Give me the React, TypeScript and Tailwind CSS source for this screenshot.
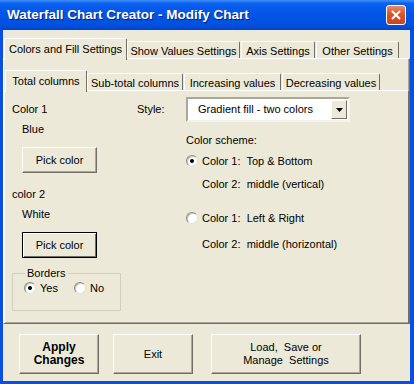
import React, { useState } from 'react';

const font = { fontFamily: '"Liberation Sans", Arial, sans-serif' };

function Radio({ checked, label, onClick }: { checked: boolean; label?: string; onClick?: () => void }) {
  return (
    <div className="flex items-center cursor-default whitespace-pre" onClick={onClick}>
      <span className="relative w-[12px] h-[12px] rounded-full bg-white border border-t-[#8d8b80] border-l-[#8d8b80] border-b-[#e4e2d6] border-r-[#e4e2d6] shadow-[inset_1px_1px_0_#c9c6b8] flex items-center justify-center">
        {checked && <span className="w-[4px] h-[4px] rounded-full bg-black" />}
      </span>
      {label && <span className="ml-[4px]">{label}</span>}
    </div>
  );
}

function Button({ children, focused, className, bold }: { children: React.ReactNode; focused?: boolean; className?: string; bold?: boolean }) {
  return (
    <button
      className={
        'flex flex-col items-center justify-center leading-[13px] bg-[#ece9d8] ' +
        (focused
          ? 'border border-black shadow-[inset_1px_1px_0_#ffffff,inset_-1px_-1px_0_#716f64] '
          : 'border border-t-white border-l-white border-b-[#716f64] border-r-[#716f64] shadow-[inset_-1px_-1px_0_#aca899] ') +
        (bold ? 'font-bold text-[12px] ' : '') +
        (className || '')
      }
    >
      {children}
    </button>
  );
}

function Tab({ label, active, className, onClick }: { label: string; active?: boolean; className: string; onClick?: () => void }) {
  return (
    <div
      onClick={onClick}
      className={
        'flex justify-center cursor-default border-l border-t border-r border-l-white border-t-white border-r-[#716f64] rounded-t-[2px] bg-[#ece9d8] ' +
        (active ? 'h-[22px] pt-[2px] -mb-[2px] relative z-10 ' : 'h-[17px] pt-[1px] ') +
        className
      }
    >
      {label}
    </div>
  );
}

export default function App() {
  const [scheme, setScheme] = useState(0);
  const [borders, setBorders] = useState(true);

  return (
    <div className="w-[414px] h-[384px] bg-[#0a4fe0] flex flex-col text-[11px] text-black" style={font}>
      {/* title bar */}
      <div className="h-[30px] flex items-center justify-between pl-[7px] pr-[8px] bg-[linear-gradient(to_bottom,#3d8ef7_0%,#0a5ff0_12%,#0055e5_50%,#0050de_85%,#0044c8_100%)]">
        <span className="text-white font-bold text-[13.5px] [text-shadow:1px_1px_0_#0a1f80]">
          Waterfall Chart Creator - Modify Chart
        </span>
        <div className="w-[20px] h-[20px] rounded-[3px] border border-white bg-[linear-gradient(to_bottom,#e98a6c,#d9552d_45%,#c94422)] flex items-center justify-center">
          <svg width="10" height="10" viewBox="0 0 10 10">
            <path d="M1 1 L9 9 M9 1 L1 9" stroke="white" strokeWidth="2" />
          </svg>
        </div>
      </div>

      {/* body */}
      <div className="flex-1 ml-[3px] mr-[4px] mb-[3px] bg-[#ece9d8] flex flex-col">
        {/* outer tabs */}
        <div className="flex items-end pt-[9px] pl-[1px] h-[28px]">
          <Tab label="Colors and Fill Settings" active className="w-[123px]" />
          <Tab label="Show Values Settings" className="w-[113px]" />
          <Tab label="Axis Settings" className="w-[74px] ml-[1px]" />
          <Tab label="Other Settings" className="w-[83px] ml-[1px]" />
        </div>

        {/* outer panel */}
        <div className="h-[266px] border border-t-white border-l-white border-r-[#716f64] border-b-[#716f64] shadow-[inset_0_-1px_0_#aca899,inset_-1px_0_0_#aca899] flex flex-col">
          <div className="flex items-end pt-[11px] pl-[1px] h-[31px]">
            <Tab label="Total columns" active className="w-[82px]" />
            <Tab label="Sub-total columns" className="w-[96px]" />
            <Tab label="Increasing values" className="w-[97px] ml-[1px]" />
            <Tab label="Decreasing values" className="w-[98px] ml-[1px]" />
          </div>

          {/* inner panel */}
          <div className="flex-1 border-t border-l border-r border-t-white border-l-white border-r-[#716f64] flex">
            {/* left column */}
            <div className="w-[131px] pl-[7px] pt-[8px] flex flex-col">
              <div className="h-[20px] flex items-center">Color 1</div>
              <div className="h-[20px] flex items-center pl-[10px]">Blue</div>
              <Button className="w-[75px] h-[26px] ml-[10px] mt-[8px]">Pick color</Button>
              <div className="h-[20px] flex items-center mt-[11px]">color 2</div>
              <div className="h-[20px] flex items-center pl-[10px]">White</div>
              <Button focused className="w-[75px] h-[26px] ml-[10px] mt-[8px]">Pick color</Button>
              <fieldset className="w-[109px] h-[44px] mt-[9px] border border-[#d0d0bf] px-[11px] pt-0 flex gap-[16px] items-center">
                <legend className="px-[2px] ml-[1px] leading-[13px]">Borders</legend>
                <Radio checked={borders} label="Yes" onClick={() => setBorders(true)} />
                <Radio checked={!borders} label="No" onClick={() => setBorders(false)} />
              </fieldset>
            </div>

            {/* right column */}
            <div className="pt-[6px] flex flex-col">
              <div className="h-[25px] flex items-center">
                <span className="w-[50px] pl-[1px]">Style:</span>
                <div className="w-[164px] h-[25px] bg-white border-2 border-t-[#aca899] border-l-[#aca899] border-b-[#f4f3ee] border-r-[#f4f3ee] flex items-center">
                  <span className="flex-1 pl-[10px]">Gradient fill - two colors</span>
                  <div className="w-[16px] h-[19px] mr-[1px] bg-[#ece9d8] border border-t-white border-l-white border-b-[#716f64] border-r-[#716f64] flex items-center justify-center">
                    <svg width="7" height="4" viewBox="0 0 7 4">
                      <path d="M0 0 H7 L3.5 4 Z" fill="black" />
                    </svg>
                  </div>
                </div>
              </div>
              <div className="pl-[50px] flex flex-col">
                <div className="h-[20px] flex items-center mt-[8px]">Color scheme:</div>
                <div className="h-[20px] flex items-center mt-[1px]">
                  <Radio checked={scheme === 0} label="Color 1:  Top & Bottom" onClick={() => setScheme(0)} />
                </div>
                <div className="h-[20px] flex items-center mt-[3px] pl-[16px] whitespace-pre">Color 2:  middle (vertical)</div>
                <div className="h-[20px] flex items-center mt-[14px]">
                  <Radio checked={scheme === 1} label="Color 1:  Left & Right" onClick={() => setScheme(1)} />
                </div>
                <div className="h-[20px] flex items-center mt-[6px] pl-[16px] whitespace-pre">Color 2:  middle (horizontal)</div>
              </div>
            </div>
          </div>
        </div>

        {/* bottom buttons */}
        <div className="flex pt-[10px] pl-[16px]">
          <Button bold className="w-[80px] h-[40px]">
            <span>Apply</span>
            <span>Changes</span>
          </Button>
          <Button className="w-[80px] h-[40px] ml-[14px]">Exit</Button>
          <Button className="w-[150px] h-[40px] ml-[18px]">
            <span className="whitespace-pre">Load,  Save or</span>
            <span className="whitespace-pre">Manage  Settings</span>
          </Button>
        </div>
      </div>
    </div>
  );
}
